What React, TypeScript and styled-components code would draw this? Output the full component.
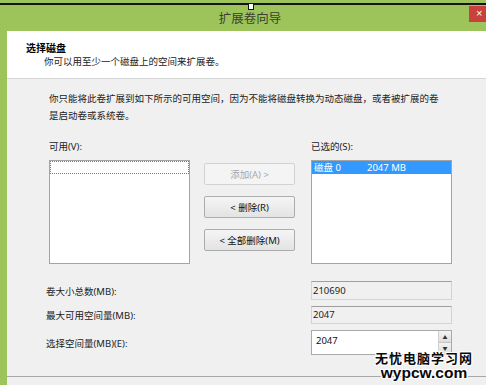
import styled, { createGlobalStyle } from 'styled-components';

const GlobalStyle = createGlobalStyle`
	html, body {
		margin: 0;
		padding: 0;
		background: #9cc45b;
	}
	body {
		font-family: "Noto Sans", "Noto Sans CJK SC", sans-serif;
		color: #1a1a1a;
	}
`;

const Frame = styled.div`
	position: relative;
	width: 486px;
	height: 385px;
	overflow: hidden;
	display: flex;
	flex-direction: column;
	background: #9cc45b;
`;

const TopEdge = styled.div`
	height: 3px;
	flex-shrink: 0;
`;

const SelectionLine = styled.div`
	position: relative;
	height: 2px;
	flex-shrink: 0;
	background: #141414;
`;

const Handle = styled.div`
	position: absolute;
	left: 248px;
	top: 0;
	width: 4px;
	height: 5px;
	background: #fff;
	border: 1px solid #141414;
`;

const TitleBar = styled.div`
	height: 26px;
	flex-shrink: 0;
	display: flex;
	align-items: flex-start;
`;

const Title = styled.div`
	flex: 1;
	padding-left: 31px;
	text-align: center;
	font-size: 12.5px;
	line-height: 26px;
	color: #3a3f34;
	font-family: "Noto Sans CJK SC", sans-serif;
`;

const CloseButton = styled.div`
	width: 17px;
	height: 16px;
	margin-top: 1px;
	background: #c8413c;
	color: #fff;
	font-size: 11px;
	line-height: 15px;
	padding-left: 7px;
	box-sizing: border-box;
	font-family: "Liberation Sans", sans-serif;
`;

const Body = styled.div`
	flex: 1;
	display: flex;
`;

const LeftRail = styled.div`
	width: 7px;
	flex-shrink: 0;
`;

const Content = styled.div`
	flex: 1;
	display: flex;
	flex-direction: column;
	background: #f0f0f0;
`;

const Header = styled.div`
	height: 48px;
	box-sizing: border-box;
	padding: 10px 0 0 19px;
	background: #fff;
	border-bottom: 1px solid #d6d6d6;
`;

const HeaderTitle = styled.div`
	font-size: 10px;
	font-weight: 700;
	line-height: 14px;
	color: #000;
`;

const HeaderSub = styled.div`
	padding-left: 18px;
	font-size: 9.5px;
	line-height: 14px;
	color: #222;
`;

const Main = styled.div`
	padding: 11px 0 21px 42px;
	font-size: 9.5px;
`;

const Intro = styled.p`
	margin: 0;
	line-height: 17px;
	white-space: nowrap;
	color: #222;
`;

const ListsRow = styled.div`
	display: flex;
	align-items: flex-start;
	margin-top: 15px;
`;

const ListColumn = styled.div<{ $offset?: number }>`
	display: flex;
	flex-direction: column;
	margin-left: ${(p) => p.$offset ?? 0}px;
`;

const FieldCaption = styled.div`
	line-height: 16px;
	color: #222;
`;

const ListBox = styled.div`
	width: 141px;
	height: 104px;
	margin-top: 5px;
	box-sizing: border-box;
	background: #fff;
	border: 1px solid #a4a4a4;
`;

const ListRow = styled.div<{ $selected?: boolean }>`
	display: grid;
	grid-template-columns: 53px auto;
	height: 13px;
	padding-left: 2px;
	line-height: 13px;
	background: ${(p) => (p.$selected ? '#3399ff' : 'transparent')};
	color: ${(p) => (p.$selected ? '#fff' : '#000')};
`;

const FocusRow = styled.div`
	height: 13px;
	box-sizing: border-box;
	border: 1px dotted #7a7a7a;
`;

const ButtonStack = styled.div`
	display: flex;
	flex-direction: column;
	gap: 11px;
	margin-left: 14px;
	padding-top: 24px;
`;

const ActionButton = styled.button`
	width: 91px;
	height: 22px;
	padding: 0;
	box-sizing: border-box;
	border: 1px solid #acacac;
	border-radius: 2px;
	background: linear-gradient(#f5f5f5, #e3e3e3);
	font: inherit;
	font-size: 9.5px;
	color: #111;
	&:disabled {
		border-color: #d2d2d2;
		background: #f4f4f4;
		color: #a8a8a8;
	}
`;

const Form = styled.div`
	display: grid;
	grid-template-columns: 265px 141px;
	row-gap: 6px;
	align-items: center;
	margin: 17px 0 0 -3px;
`;

const FormLabel = styled.div`
	color: #222;
	font-size: 9.5px;
`;

const ReadOnlyField = styled.div<{ $h: number }>`
	height: ${(p) => p.$h}px;
	box-sizing: border-box;
	padding-left: 1px;
	line-height: ${(p) => p.$h - 2}px;
	border: 1px solid #d3d3d3;
	border-top-color: #9e9e9e;
	background: #f0f0f0;
	color: #222;
`;

const SpinBox = styled.div`
	height: 25px;
	box-sizing: border-box;
	display: flex;
	border: 1px solid #a9a9a9;
	background: #fff;
`;

const SpinValue = styled.div`
	flex: 1;
	padding: 3px 0 0 4px;
	line-height: 13px;
	color: #111;
`;

const SpinArrows = styled.div`
	width: 12px;
	display: flex;
	flex-direction: column;
	border-left: 1px solid #d0d0d0;
`;

const SpinArrow = styled.div`
	flex: 1;
	display: flex;
	align-items: center;
	justify-content: center;
	background: linear-gradient(#f3f3f3, #dedede);
	border-bottom: 1px solid #c4c4c4;
	font-size: 5px;
	color: #333;
`;

const FooterRule = styled.div`
	flex: 1;
	border-top: 1px solid #a8a8a8;
`;

const Watermark = styled.div`
	position: absolute;
	left: 375px;
	top: 350px;
	display: flex;
	flex-direction: column;
	align-items: center;
	color: #0a0a0a;
	font-weight: 700;
	text-shadow: 1px 0 0 #fff, -1px 0 0 #fff, 0 1px 0 #fff, 0 -1px 0 #fff, 1px 1px 0 #fff,
		-1px -1px 0 #fff, 1px -1px 0 #fff, -1px 1px 0 #fff;
`;

const WatermarkName = styled.span`
	font-family: "Noto Sans CJK SC", sans-serif;
	font-size: 13px;
	letter-spacing: 1px;
	line-height: 15px;
`;

const WatermarkSite = styled.span`
	font-family: "Liberation Sans", sans-serif;
	font-size: 15.5px;
	line-height: 15px;
`;

export default function App() {
	return (
		<>
			<GlobalStyle />
			<Frame>
				<TopEdge />
				<SelectionLine>
					<Handle />
				</SelectionLine>
				<TitleBar>
					<Title>扩展卷向导</Title>
					<CloseButton>×</CloseButton>
				</TitleBar>
				<Body>
					<LeftRail />
					<Content>
						<Header>
							<HeaderTitle>选择磁盘</HeaderTitle>
							<HeaderSub>你可以用至少一个磁盘上的空间来扩展卷。</HeaderSub>
						</Header>
						<Main>
							<Intro>
								你只能将此卷扩展到如下所示的可用空间，因为不能将磁盘转换为动态磁盘，或者被扩展的卷
								<br />
								是启动卷或系统卷。
							</Intro>
							<ListsRow>
								<ListColumn>
									<FieldCaption>可用(V):</FieldCaption>
									<ListBox>
										<FocusRow />
									</ListBox>
								</ListColumn>
								<ButtonStack>
									<ActionButton disabled>添加(A) &gt;</ActionButton>
									<ActionButton>&lt; 删除(R)</ActionButton>
									<ActionButton>&lt; 全部删除(M)</ActionButton>
								</ButtonStack>
								<ListColumn $offset={16}>
									<FieldCaption>已选的(S):</FieldCaption>
									<ListBox>
										<ListRow $selected>
											<span>磁盘 0</span>
											<span>2047 MB</span>
										</ListRow>
									</ListBox>
								</ListColumn>
							</ListsRow>
							<Form>
								<FormLabel>卷大小总数(MB):</FormLabel>
								<ReadOnlyField $h={19}>210690</ReadOnlyField>
								<FormLabel>最大可用空间量(MB):</FormLabel>
								<ReadOnlyField $h={18}>2047</ReadOnlyField>
								<FormLabel>选择空间量(MB)(E):</FormLabel>
								<SpinBox>
									<SpinValue>2047</SpinValue>
									<SpinArrows>
										<SpinArrow>▲</SpinArrow>
										<SpinArrow>▼</SpinArrow>
									</SpinArrows>
								</SpinBox>
							</Form>
						</Main>
						<FooterRule />
					</Content>
				</Body>
				<Watermark>
					<WatermarkName>无忧电脑学习网</WatermarkName>
					<WatermarkSite>wypcw.com</WatermarkSite>
				</Watermark>
			</Frame>
		</>
	);
}
